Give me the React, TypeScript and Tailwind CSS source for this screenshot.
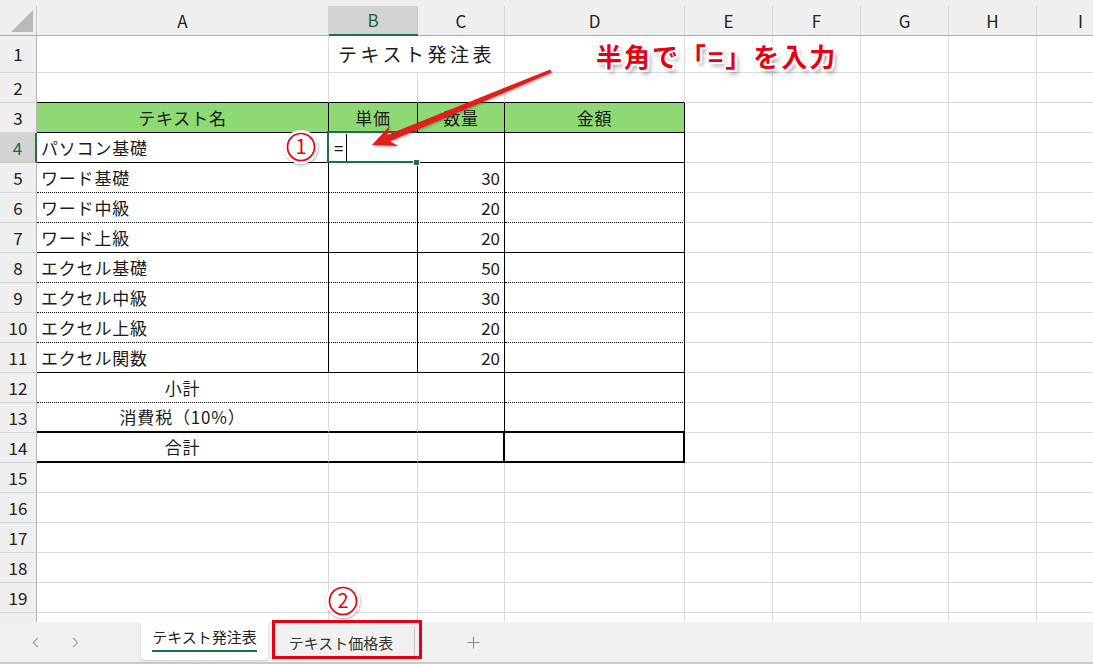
import React from 'react';
import { ChevronLeft, ChevronRight, Plus } from 'lucide-react';

const GR = 'border-r border-r-[#dadada]';
const GB = 'border-b border-b-[#dadada]';
const KR = 'border-r border-r-black';
const KR2 = 'border-r-2 border-r-black';
const KB = 'border-b border-b-black';
const DB = 'border-b border-b-black [border-bottom-style:dotted]!';
const KB2 = 'border-b-2 border-b-black';
const WR = 'border-r border-r-white';

const LEFT = 'justify-start pl-[4px] tracking-[0.8px]';
const CENTER = 'justify-center tracking-[0.8px]';
const RIGHT = 'justify-end pr-[4px]';

const LETTERS = ['A', 'B', 'C', 'D', 'E', 'F', 'G', 'H', 'I'];

const names: Record<number, string> = {
  4: 'パソコン基礎',
  5: 'ワード基礎',
  6: 'ワード中級',
  7: 'ワード上級',
  8: 'エクセル基礎',
  9: 'エクセル中級',
  10: 'エクセル上級',
  11: 'エクセル関数',
  12: '小計',
  13: '消費税（10%）',
  14: '合計',
};

const qty: Record<number, string> = {
  5: '30',
  6: '20',
  7: '20',
  8: '50',
  9: '30',
  10: '20',
  11: '20',
};

type Cell = { cls: string; t?: string } | null;

function getCell(r: number, c: number): Cell {
  if (c > 3) return { cls: `${GR} ${GB}` };
  if (r === 1) {
    if (c === 1)
      return {
        cls: `${GR} ${GB} col-span-2 justify-center text-[19px] tracking-[3.5px]`,
        t: 'テキスト発注表',
      };
    if (c === 2) return null;
    return { cls: `${GR} ${GB}` };
  }
  if (r === 2) return { cls: `${GR} ${KB}` };
  if (r === 3)
    return {
      cls: `${KR} ${KB} bg-[#8ed973] ${CENTER}`,
      t: ['テキスト名', '単価', '数量', '金額'][c],
    };
  if (r === 4) {
    if (c === 0) return { cls: `${KR} ${KB} ${LEFT}`, t: names[4] };
    if (c === 1) return { cls: `${WR} ${KB} justify-start pl-[5px]`, t: '=' };
    return { cls: `${KR} ${KB}` };
  }
  if (r >= 5 && r <= 11) {
    const b = r === 7 || r === 11 ? KB : DB;
    if (c === 0) return { cls: `${KR} ${b} ${LEFT}`, t: names[r] };
    if (c === 2) return { cls: `${KR} ${b} ${RIGHT}`, t: qty[r] };
    return { cls: `${KR} ${b}` };
  }
  if (r >= 12 && r <= 14) {
    const b = r === 12 ? DB : KB2;
    const rr = c < 2 ? GR : r === 14 ? KR2 : KR;
    if (c === 0) return { cls: `${rr} ${b} ${CENTER}`, t: names[r] };
    return { cls: `${rr} ${b}` };
  }
  return { cls: `${GR} ${GB}` };
}

function Sheet() {
  const rows = Array.from({ length: 20 }, (_, i) => i + 1);
  return (
    <div className="h-[622px] overflow-hidden">
      <div className="grid grid-cols-[37px_292px_89px_87px_180px_88px_88px_88px_88px_88px] grid-rows-[36px_37px_repeat(19,30px)]">
        {/* corner */}
        <div className="bg-[#efefef] border-b border-b-[#ababab] pt-[6px]">
          <div className="h-full border-r border-r-[#c8c8c8] relative">
            <svg width="36" height="29" className="absolute left-0 top-0">
              <polygon points="33,4 33,26 11,26" fill="#b9b9b9" />
            </svg>
          </div>
        </div>
        {LETTERS.map((L) =>
          L === 'B' ? (
            <div key={L} className="bg-[#efefef] border-b-2 border-b-[#1e7145] pt-[6px]">
              <div className="h-full bg-[#d3d3d3] border-r border-r-[#c4c4c4] flex items-center justify-center text-[17px] text-[#1d5f3a]">
                {L}
              </div>
            </div>
          ) : (
            <div key={L} className="bg-[#efefef] border-b border-b-[#ababab] pt-[6px]">
              <div className="h-full border-r border-r-[#d5d5d5] flex items-center justify-center text-[17px] text-[#222]">
                {L}
              </div>
            </div>
          )
        )}
        {rows.map((r) => (
          <React.Fragment key={r}>
            {r === 4 ? (
              <div className="bg-[#d3d3d3] border-r-2 border-r-[#1e7145] border-b border-b-[#c4c4c4] flex items-center justify-center text-[17px] text-[#1e6a40]">
                {r}
              </div>
            ) : (
              <div className="bg-[#efefef] border-r border-r-[#b5b5b5] border-b border-b-[#d4d4d4] flex items-center justify-center text-[17px] text-[#222]">
                {r < 20 ? r : ''}
              </div>
            )}
            {LETTERS.map((_, c) => {
              const cell = getCell(r, c);
              if (!cell) return null;
              return (
                <div
                  key={c}
                  className={`flex items-center whitespace-nowrap overflow-visible text-[17px] text-[#1a1a1a] ${cell.cls}`}
                >
                  {cell.t}
                </div>
              );
            })}
          </React.Fragment>
        ))}
      </div>
    </div>
  );
}

function TabBar() {
  return (
    <div className="h-[42px] bg-[#f0f0f0] border-b-2 border-b-[#c9c9c9] flex items-stretch">
      <div className="w-[20px]" />
      <div className="w-[30px] flex items-center justify-center text-[#a3a3a3]">
        <ChevronLeft size={17} strokeWidth={1.5} />
      </div>
      <div className="w-[10px]" />
      <div className="w-[30px] flex items-center justify-center text-[#a3a3a3]">
        <ChevronRight size={17} strokeWidth={1.5} />
      </div>
      <div className="w-[51px]" />
      <div className="w-[127px] h-[38px] self-start bg-white rounded-b-[4px] shadow-[0_1px_2px_rgba(0,0,0,0.15)] flex items-start justify-center pt-[4px]">
        <span className="text-[15px] text-[#222] leading-[22px] pb-[2px] border-b-2 border-b-[#1e7145]">
          テキスト発注表
        </span>
      </div>
      <div className="w-[146px] flex items-center justify-center">
        <span className="text-[15px] text-[#333] leading-[22px] pt-[2px]">テキスト価格表</span>
      </div>
      <div className="w-px h-[30px] self-center bg-[#c6c6c6]" />
      <div className="w-[40px]" />
      <div className="w-[36px] flex items-center justify-center text-[#8c8c8c]">
        <Plus size={19} strokeWidth={1.4} />
      </div>
    </div>
  );
}

function Circled({ cx, cy, n }: { cx: number; cy: number; n: string }) {
  return (
    <g>
      <circle cx={cx} cy={cy} r={17} fill="#fff" filter="url(#sh)" />
      <circle cx={cx} cy={cy} r={13.5} fill="#fff" stroke="#e60012" strokeWidth={1.7} />
      <text
        x={cx}
        y={cy + 7}
        textAnchor="middle"
        fontSize={20}
        fill="#e60012"
        fontFamily="'Noto Sans CJK JP', sans-serif"
      >
        {n}
      </text>
    </g>
  );
}

export default function App() {
  return (
    <div className="w-[1093px] h-[664px] relative overflow-hidden bg-white font-['Noto_Sans_CJK_JP',sans-serif]">
      <Sheet />
      <TabBar />

      {/* selection box on B4 */}
      <div className="absolute left-[327px] top-[131px] w-[90px] h-[32px] border-l-2 border-t-2 border-b-2 border-[#1e7145]" />
      <div className="absolute left-[413px] top-[159px] w-[7px] h-[7px] bg-[#1e7145] border border-white" />
      <div className="absolute left-[346px] top-[134px] w-px h-[27px] bg-black" />

      {/* red annotation text */}
      <div className="absolute left-[596px] top-[38px] text-[26px] font-bold tracking-[2px] text-[#e60012] whitespace-nowrap leading-[36px] [text-shadow:2px_0_0_#fff,-2px_0_0_#fff,0_2px_0_#fff,0_-2px_0_#fff,2px_2px_0_#fff,-2px_-2px_0_#fff,2px_-2px_0_#fff,-2px_2px_0_#fff,3px_4px_4px_rgba(0,0,0,0.4)]">
        半角で「=」を入力
      </div>

      {/* arrow + circled numbers */}
      <svg className="absolute left-0 top-0 pointer-events-none" width="1093" height="664">
        <defs>
          <filter id="sh" x="-50%" y="-50%" width="200%" height="200%">
            <feDropShadow dx="0.5" dy="1.2" stdDeviation="1.2" floodColor="#000" floodOpacity="0.35" />
          </filter>
        </defs>
        <polygon
          points="372,145 398.4,146 389.9,141.2 551.7,72.6 550.3,69.4 387.3,135 390,125.6"
          fill="#e31a1c"
          filter="url(#sh)"
        />
        <Circled cx={301} cy={147} n="1" />
        <Circled cx={343} cy={601} n="2" />
      </svg>

      {/* red box around second tab */}
      <div className="absolute left-[272px] top-[620px] w-[150px] h-[39px] border-[3px] border-[#e60012]" />
    </div>
  );
}
